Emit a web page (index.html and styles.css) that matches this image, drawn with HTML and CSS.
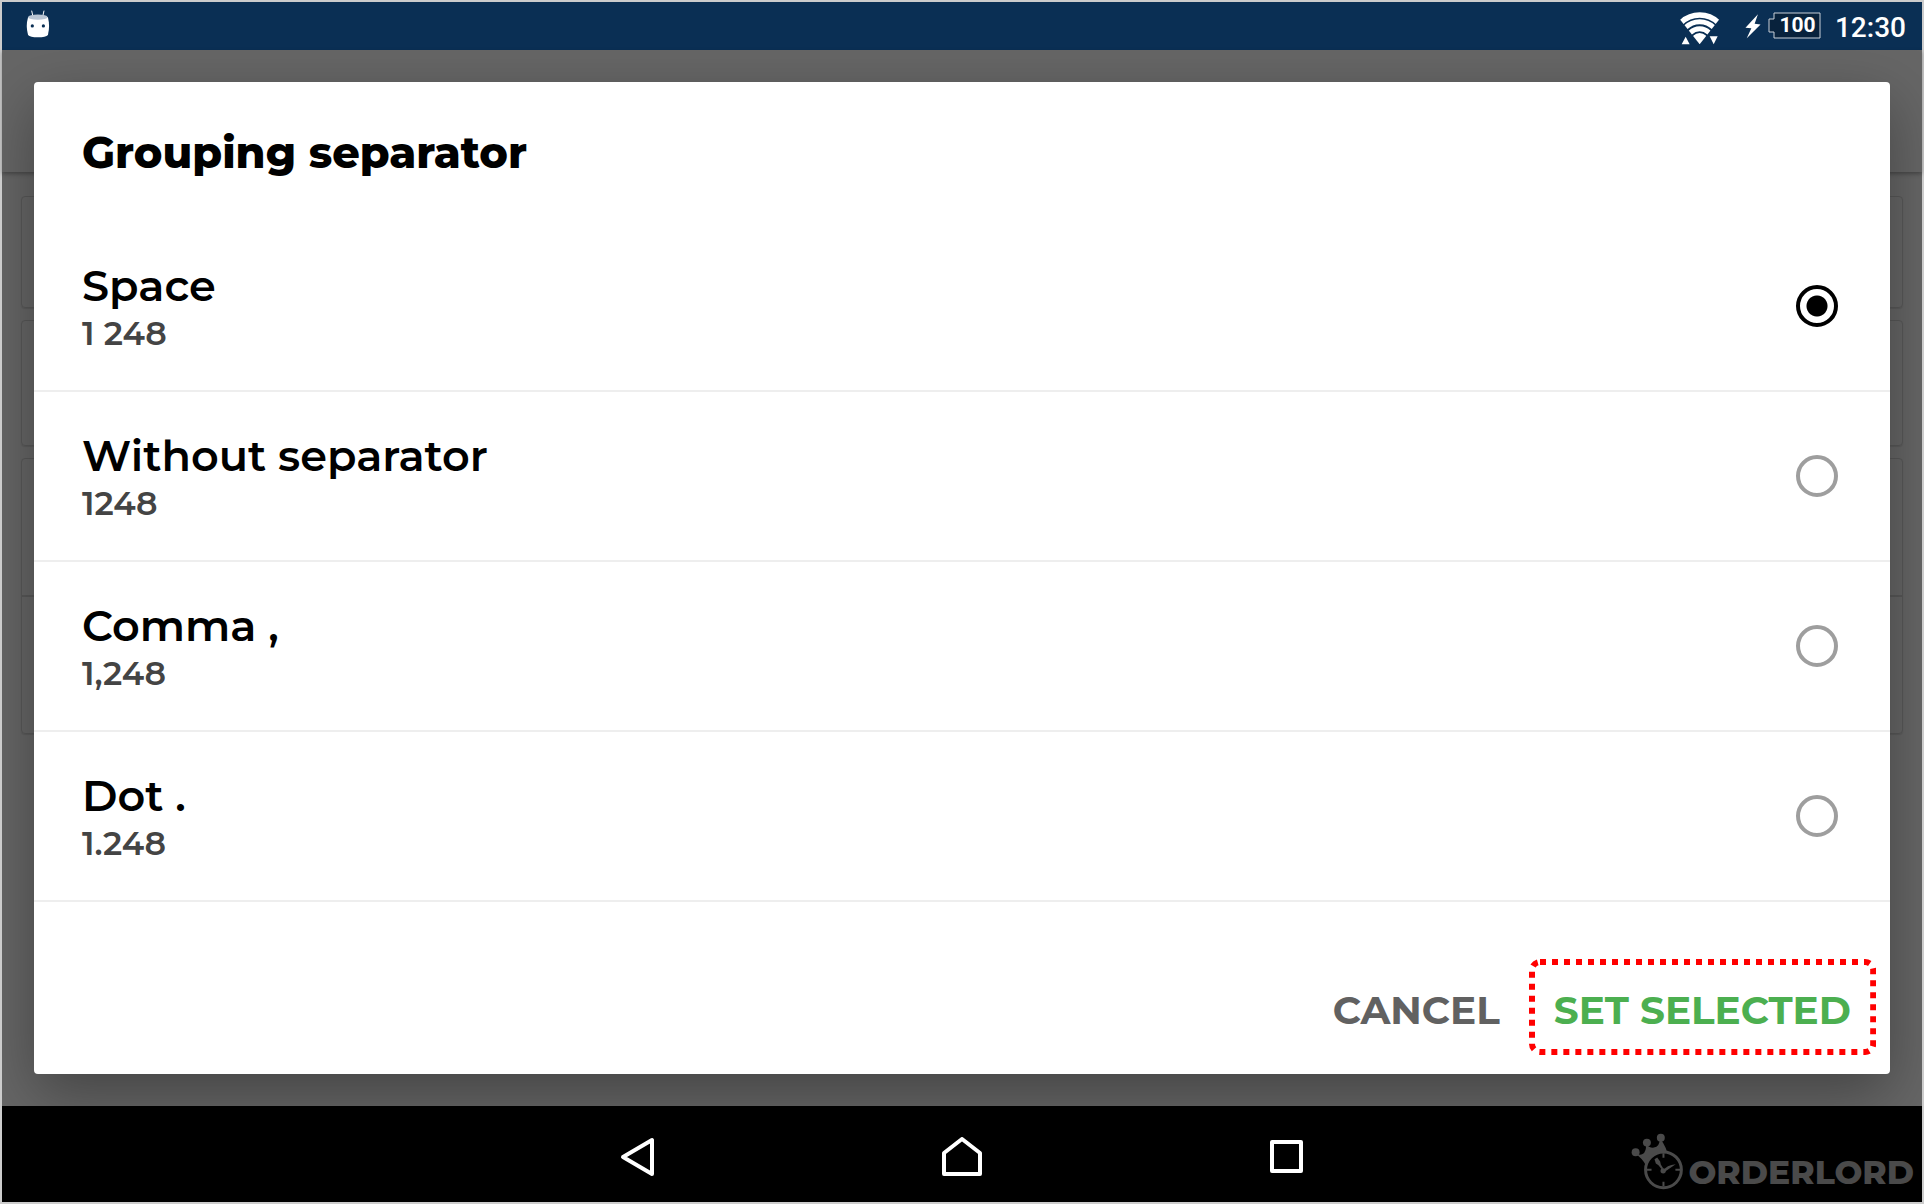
FILE: index.html
```html
<!DOCTYPE html>
<html lang="en">
<head>
<meta charset="utf-8">
<meta name="viewport" content="width=device-width, initial-scale=1">
<title>Grouping separator</title>
<link rel="stylesheet" href="styles.css">
</head>
<body>
<div class="device">
  <header class="status">
    <svg class="status-robot" viewBox="78 29 73 86" aria-hidden="true">
      <path d="M95 31l4 18M133 31l-4 18" stroke="#fff" stroke-width="3"/>
      <path d="M84 51Q114 41 145 51Q152 78 145 106Q139 113 114 113Q90 113 84 106Q76 78 84 51Z" fill="#fff"/>
      <ellipse cx="114" cy="51" rx="30" ry="8" fill="#b9c5d3"/>
      <circle cx="97" cy="78" r="5" fill="#0a2f54"/><circle cx="131" cy="78" r="5" fill="#0a2f54"/>
    </svg>
    <div class="status-right">
      <svg class="status-wifi" viewBox="118 35 120 99" aria-hidden="true">
        <clipPath id="fan"><path d="M177 132L113 51V30H241V51Z"/></clipPath>
        <g clip-path="url(#fan)" fill="none" stroke="#fff">
          <circle cx="177" cy="124" r="80" stroke-width="16"/>
          <circle cx="177" cy="124" r="60" stroke-width="15"/>
          <circle cx="177" cy="124" r="39" stroke-width="15"/>
          <circle cx="177" cy="124" r="13" stroke-width="26"/>
        </g>
        <path d="M123 132L135 109L147 132ZM207 108H231L219 132Z" fill="#fff"/>
      </svg>
      <svg class="status-bolt" viewBox="314 39 48 76" aria-hidden="true"><path d="M353 40L315 81L333 82L319 113L361 71L343 69Z" fill="#fff"/></svg>
      <div class="battery">
        <svg viewBox="0 0 53 27" aria-hidden="true"><path d="M6 1H52V26H6V20H1V7H6Z" fill="#08223c" stroke="#c8d0d8" stroke-width="1"/></svg>
        <span>100</span>
      </div>
      <time class="clock">12:30</time>
    </div>
  </header>

  <main class="screen">
    <div class="page" aria-hidden="true">
      <div class="toolbar"></div>
      <div class="cards">
        <div class="card"></div>
        <div class="card card-medium"></div>
        <div class="card card-tall"></div>
      </div>
    </div>
    <div class="scrim">
      <form class="dialog" role="dialog" aria-labelledby="title">
        <h1 class="title" id="title">Grouping separator</h1>
        <label class="option">
          <span class="option-text"><span class="name">Space</span><span class="sample">1 248</span></span>
          <input class="radio" type="radio" name="separator" checked>
        </label>
        <label class="option">
          <span class="option-text"><span class="name">Without separator</span><span class="sample">1248</span></span>
          <input class="radio" type="radio" name="separator">
        </label>
        <label class="option">
          <span class="option-text"><span class="name">Comma ,</span><span class="sample">1,248</span></span>
          <input class="radio" type="radio" name="separator">
        </label>
        <label class="option">
          <span class="option-text"><span class="name">Dot .</span><span class="sample">1.248</span></span>
          <input class="radio" type="radio" name="separator">
        </label>
        <div class="actions">
          <button class="button" type="button">CANCEL</button>
          <button class="button button-primary" type="button">SET SELECTED
            <svg class="highlight" aria-hidden="true"><rect x="3" y="3" rx="8"/></svg>
          </button>
        </div>
      </form>
    </div>
  </main>

  <footer class="nav">
    <div class="nav-buttons">
      <button class="nav-button" type="button" aria-label="Back"><svg viewBox="0 0 40 40"><path d="M34 3V37L5 20Z"/></svg></button>
      <button class="nav-button" type="button" aria-label="Home"><svg viewBox="0 0 40 40"><path d="M2 16L20 2L38 16V37H2Z"/></svg></button>
      <button class="nav-button" type="button" aria-label="Recent apps"><svg viewBox="0 0 40 40"><path d="M6 5H35V34H6Z"/></svg></button>
    </div>
    <div class="brand">
      <svg class="brand-mark" viewBox="92 100 158 172" aria-hidden="true">
        <g fill="#4a4a4a">
          <circle cx="105" cy="158" r="12"/><circle cx="139" cy="129" r="12"/><circle cx="181" cy="114" r="12"/>
          <path d="M103 162Q119 168 126 163Q138 157 136 133Q147 146 160 144Q178 142 178 116Q185 126 188 130Q196 143 201 160Q150 153 136 198Q126 177 103 162Z"/>
          <path d="M162 179l8-5 9 12 2 9 7 11-4 4-10-13-8-5Z"/>
          <circle cx="188" cy="214" r="8"/>
        </g>
        <circle cx="189" cy="211" r="54" fill="none" stroke="#4a4a4a" stroke-width="9"/>
        <path d="M189 161v14M189 247v14M139 211h14M225 211h14" stroke="#4a4a4a" stroke-width="6"/>
        <path d="M188 214Q198 196 226 194Q211 204 190 219Z" fill="#4a4a4a"/>
      </svg>
      <span class="brand-name">ORDERLORD</span>
    </div>
  </footer>
</div>
</body>
</html>
```
FILE: styles.css
```css
* { box-sizing: border-box; }

body {
  margin: 0;
  font-family: Montserrat, Inter, sans-serif;
  color: #000;
}

.device {
  display: flex;
  flex-direction: column;
  min-height: 100vh;
  border: 2px solid #ccc;
  background: #000;
}

svg { display: block; }

/* Status bar */
.status {
  display: flex;
  align-items: center;
  justify-content: space-between;
  height: 48px;
  padding: 0 16px 0 24px;
  background: #0a2f54;
  color: #fff;
  font-family: Roboto, sans-serif;
}
.status-robot { width: 24px; height: 28px; margin-bottom: 4px; }
.status-right { display: flex; align-items: center; }
.status-wifi { width: 40px; height: 33px; margin: 4px 25px 0 0; }
.status-bolt { width: 16px; height: 25px; margin-right: 7px; }
.battery { display: grid; width: 53px; height: 27px; margin: 0 14px 2px 0; }
.battery svg, .battery span { grid-area: 1 / 1; }
.battery span {
  padding-left: 6px;
  font-size: 21px;
  font-weight: 700;
  line-height: 27px;
  text-align: center;
}
.clock { padding-top: 4px; font-size: 28px; font-weight: 500; line-height: 44px; }

/* Dimmed page behind the dialog */
.screen { display: grid; flex: 1; background: #666; }
.page, .scrim { grid-area: 1 / 1; }
.toolbar { height: 122px; box-shadow: 0 2px 4px rgba(0, 0, 0, .3); }
.cards {
  display: flex;
  flex-direction: column;
  gap: 12px;
  padding: 24px 19px;
}
.card { height: 112px; border: 1px solid #585858; border-radius: 4px; box-shadow: 0 1px 1px rgba(0, 0, 0, .1); }
.card-medium { height: 126px; }
.card-tall { height: 276px; background: linear-gradient(#585858, #585858) 0 136px / 100% 2px no-repeat; }

/* Dialog */
.scrim { position: relative; display: flex; padding: 32px; overflow: hidden; }
.dialog {
  display: flex;
  flex: 1;
  flex-direction: column;
  border-radius: 4px;
  background: #fff;
  box-shadow: 0 20px 60px rgba(0, 0, 0, .34);
}
.title {
  margin: 0;
  padding: 41px 48px 39px;
  font-size: 43px;
  font-weight: 800;
  line-height: 60px;
}
.option {
  display: flex;
  align-items: center;
  justify-content: space-between;
  height: 170px;
  padding: 0 52px 0 48px;
  border-bottom: 2px solid #eee;
}
.option-text { display: flex; flex-direction: column; }
.name { font-size: 43px; font-weight: 600; line-height: 54px; }
.sample { color: #444; font-size: 33px; font-weight: 600; line-height: 40px; }
.radio {
  width: 42px;
  height: 42px;
  margin: 0;
  border: 4px solid #9e9e9e;
  border-radius: 50%;
  appearance: none;
}
.radio:checked {
  border-color: #000;
  background: radial-gradient(circle, #000 10px, transparent 11px);
}
.actions {
  display: flex;
  flex: 1;
  align-items: flex-end;
  justify-content: flex-end;
  gap: 4px;
  padding: 0 14px 19px 0;
}
.button {
  position: relative;
  height: 96px;
  padding: 5px 25px 0;
  border: 0;
  background: none;
  color: #616161;
  font: inherit;
  font-size: 39px;
  font-weight: 700;
}
.button-primary { color: #4caf50; }
.highlight { position: absolute; inset: 0; width: 100%; height: 100%; }
.highlight rect {
  width: calc(100% - 6px);
  height: calc(100% - 6px);
  fill: none;
  stroke: #f00;
  stroke-width: 6px;
  stroke-dasharray: 6 6;
}

/* Navigation bar */
.nav { display: grid; align-items: center; height: 96px; }
.nav-buttons, .brand { grid-area: 1 / 1; }
.nav-buttons { display: flex; justify-content: center; gap: 284px; padding-top: 6px; }
.nav-button { width: 40px; height: 40px; padding: 0; border: 0; background: none; }
.nav-button svg { width: 40px; height: 40px; fill: none; stroke: #fff; stroke-width: 4px; stroke-linejoin: round; }
.brand {
  display: flex;
  align-items: flex-end;
  justify-self: end;
  gap: 4px;
  padding: 14px 8px 0 0;
  color: #4a4a4a;
}
.brand-mark { width: 53px; height: 57px; }
.brand-name { font-size: 33px; font-weight: 800; line-height: 36px; }
```
